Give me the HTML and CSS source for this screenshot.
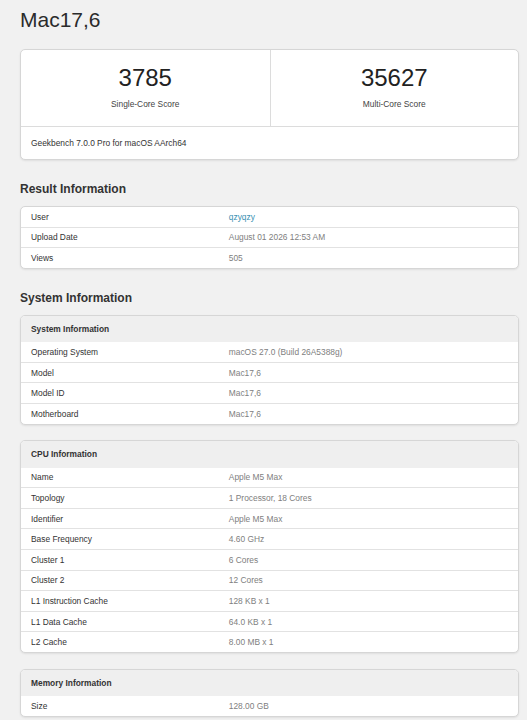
FILE: index.html
```html
<!DOCTYPE html>
<html lang="en">
<head>
    <meta charset="UTF-8">
    <meta name="viewport" content="width=device-width, initial-scale=1.0">
    <title>Mac17,6 - Geekbench</title>
    <link rel="stylesheet" href="styles.css">
</head>
<body>
    <h1 class="device">Mac17,6</h1>

    <div class="card scores">
        <div class="score-row">
            <div class="score">
                <div class="score-value">3785</div>
                <div class="score-label">Single-Core Score</div>
            </div>
            <div class="score">
                <div class="score-value">35627</div>
                <div class="score-label">Multi-Core Score</div>
            </div>
        </div>
        <div class="score-footer">Geekbench 7.0.0 Pro for macOS AArch64</div>
    </div>

    <h2 class="section-title">Result Information</h2>
    <div class="card">
        <div class="row first">
            <div class="name">User</div>
            <div class="value"><a href="#" class="user">qzyqzy</a></div>
        </div>
        <div class="row">
            <div class="name">Upload Date</div>
            <div class="value">August 01 2026 12:53 AM</div>
        </div>
        <div class="row">
            <div class="name">Views</div>
            <div class="value">505</div>
        </div>
    </div>

    <h2 class="section-title">System Information</h2>
    <div class="card">
        <div class="card-head">System Information</div>
        <div class="row">
            <div class="name">Operating System</div>
            <div class="value">macOS 27.0 (Build 26A5388g)</div>
        </div>
        <div class="row">
            <div class="name">Model</div>
            <div class="value">Mac17,6</div>
        </div>
        <div class="row">
            <div class="name">Model ID</div>
            <div class="value">Mac17,6</div>
        </div>
        <div class="row">
            <div class="name">Motherboard</div>
            <div class="value">Mac17,6</div>
        </div>
    </div>

    <div class="card spaced">
        <div class="card-head">CPU Information</div>
        <div class="row">
            <div class="name">Name</div>
            <div class="value">Apple M5 Max</div>
        </div>
        <div class="row">
            <div class="name">Topology</div>
            <div class="value">1 Processor, 18 Cores</div>
        </div>
        <div class="row">
            <div class="name">Identifier</div>
            <div class="value">Apple M5 Max</div>
        </div>
        <div class="row">
            <div class="name">Base Frequency</div>
            <div class="value">4.60 GHz</div>
        </div>
        <div class="row">
            <div class="name">Cluster 1</div>
            <div class="value">6 Cores</div>
        </div>
        <div class="row">
            <div class="name">Cluster 2</div>
            <div class="value">12 Cores</div>
        </div>
        <div class="row">
            <div class="name">L1 Instruction Cache</div>
            <div class="value">128 KB x 1</div>
        </div>
        <div class="row">
            <div class="name">L1 Data Cache</div>
            <div class="value">64.0 KB x 1</div>
        </div>
        <div class="row">
            <div class="name">L2 Cache</div>
            <div class="value">8.00 MB x 1</div>
        </div>
    </div>

    <div class="card spaced">
        <div class="card-head">Memory Information</div>
        <div class="row">
            <div class="name">Size</div>
            <div class="value">128.00 GB</div>
        </div>
    </div>
</body>
</html>
```

FILE: styles.css
```css
body {
    margin: 0;
    padding: 0 8px 20px 20px;
    font-family: "Liberation Sans", Arial, sans-serif;
    background-color: #f1f1f1;
    color: #333;
}

.device {
    margin: 8px 0 17px;
    font-size: 21px;
    font-weight: normal;
    line-height: 24px;
    color: #2b2b2b;
}

.section-title {
    margin: 22px 0 10px;
    font-size: 12px;
    font-weight: bold;
    line-height: 14px;
    color: #333;
}

.card {
    background-color: white;
    border: 1px solid #d6d6d6;
    border-radius: 5px;
    box-shadow: 0 1px 2px rgba(0, 0, 0, 0.08);
    overflow: hidden;
}

.card.spaced {
    margin-top: 15.5px;
}

/* score box at the top */
.score-row {
    display: grid;
    grid-template-columns: 1fr 1fr;
}

.score {
    text-align: center;
    padding: 16px 0 17px;
}

.score + .score {
    border-left: 1px solid #dcdcdc;
}

.score-value {
    font-size: 24px;
    line-height: 24px;
    color: #222;
}

.score-label {
    margin-top: 9px;
    font-size: 8.4px;
    line-height: 10px;
    color: #444;
}

.score-footer {
    border-top: 1px solid #dcdcdc;
    padding: 11px 10px 11px;
    font-size: 8.4px;
    line-height: 10px;
    color: #333;
}

/* info tables */
.card-head {
    height: 26.5px;
    box-sizing: border-box;
    padding: 0 10px;
    display: flex;
    align-items: center;
    background-color: #efefef;
    font-size: 8.4px;
    font-weight: bold;
    color: #333;
}

.row {
    display: grid;
    grid-template-columns: 40% 1fr;
    align-items: center;
    height: 20.6px;
    box-sizing: border-box;
    border-top: 1px solid #e2e2e2;
    font-size: 8.4px;
}

.row.first,
.card-head + .row {
    border-top: none;
    height: 19.6px;
}

.name {
    padding-left: 10px;
    color: #333;
}

.value {
    padding-left: 9px;
    color: #808080;
}

.user {
    color: #3a91b3;
    text-decoration: none;
}
```
